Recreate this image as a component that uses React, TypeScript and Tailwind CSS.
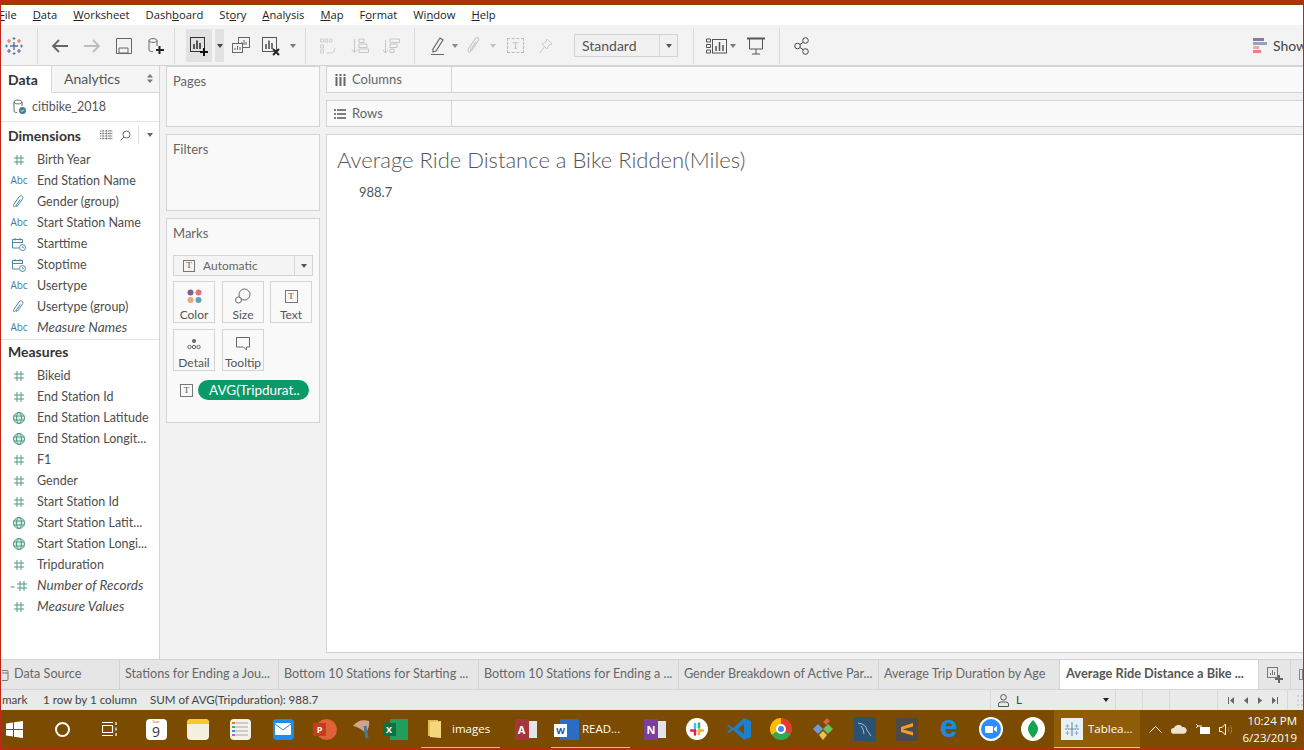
import React from 'react';

const Svg = ({ w = 20, h = 20, children, className = '' }: { w?: number; h?: number; children: React.ReactNode; className?: string }) => (
  <svg width={w} height={h} viewBox={`0 0 ${w} ${h}`} fill="none" className={`shrink-0 ${className}`}>
    {children}
  </svg>
);

const Caret = ({ color = '#666', className = '' }: { color?: string; className?: string }) => (
  <svg width="6" height="4" viewBox="0 0 6 4" className={`shrink-0 ${className}`}>
    <path d="M0 0h6L3 4z" fill={color} />
  </svg>
);

const Sep = ({ className = '' }: { className?: string }) => <div className={`w-px h-[36px] bg-[#dcdcdc] shrink-0 ${className}`} />;

const menus: [string, string, string][] = [
  ['', 'F', 'ile'],
  ['', 'D', 'ata'],
  ['', 'W', 'orksheet'],
  ['Dash', 'b', 'oard'],
  ['St', 'o', 'ry'],
  ['', 'A', 'nalysis'],
  ['', 'M', 'ap'],
  ['F', 'o', 'rmat'],
  ['Wi', 'n', 'dow'],
  ['', 'H', 'elp'],
];

const TableauLogo = ({ size = 20 }: { size?: number }) => (
  <svg width={size} height={size} viewBox="0 0 20 20" className="shrink-0">
    <path d="M10 6v8M6 10h8" stroke="#5b6f9c" strokeWidth="1.400" />
    <path d="M5 3v4M3 5h4M15 3v4M13 5h4" stroke="#e2725b" strokeWidth="1.200" />
    <path d="M5 13v4M3 15h4M15 13v4M13 15h4" stroke="#7b5d93" strokeWidth="1.200" />
    <path d="M10 1v3M8.500 2.500h3M10 16v3M8.500 17.500h3M2.500 8.500v3M1 10h3M17.500 8.500v3M16 10h3" stroke="#3d8da8" strokeWidth="1" />
  </svg>
);

const ChartBox = ({ color = '#444' }: { color?: string }) => (
  <>
    <rect x="1.500" y="1.500" width="14" height="14" stroke={color} />
    <path d="M5 13V8M8 13V4.500M11 13V7" stroke={color} strokeWidth="1.600" />
  </>
);

const Toolbar = () => (
  <div className="h-[41px] bg-[#f3f3f3] border-b border-[#d4d4d4] flex items-center pl-[3px] pt-[1px] shrink-0">
    <TableauLogo />
    <Sep className="ml-[13px]" />
    <Svg className="ml-[12px]">
      <path d="M18 10H3M9 4l-6 6 6 6" stroke="#666" strokeWidth="1.800" />
    </Svg>
    <Svg className="ml-[12px]">
      <path d="M2 10h15M11 4l6 6-6 6" stroke="#bdbdbd" strokeWidth="1.800" />
    </Svg>
    <Svg w={16} h={16} className="ml-[14px]">
      <path d="M.5.5h15v15H.5z" stroke="#666" />
      <path d="M3 15v-5h9v5z" stroke="#666" />
    </Svg>
    <Svg w={18} h={18} className="ml-[15px]">
      <path d="M2 3.500C2 1 10 1 10 3.500V9M2 3.500V13c0 1 1.500 1.500 4 1.700M2 3.500c0 2.500 8 2.500 8 0" stroke="#666" />
      <path d="M12.500 9v8M9 13h8" stroke="#222" strokeWidth="2" />
    </Svg>
    <Sep className="ml-[9px]" />
    <div className="ml-[11px] w-[26px] h-[33px] bg-[#e2e2e2] flex items-center justify-center">
      <Svg w={20} h={20}>
        <ChartBox color="#333" />
        <path d="M15 12v8M11 16h8" stroke="#111" strokeWidth="2" />
      </Svg>
    </div>
    <div className="ml-[3px] w-[9px] h-[33px] bg-[#e2e2e2] flex items-center justify-center">
      <Caret color="#444" />
    </div>
    <Svg w={18} h={17} className="ml-[8px]">
      <rect x="6.500" y=".5" width="11" height="10" fill="#f3f3f3" stroke="#666" />
      <path d="M10 8V5M12 8V3M14 8V5" stroke="#666" />
      <rect x=".5" y="6.500" width="10" height="9" fill="#f3f3f3" stroke="#666" />
      <path d="M3 13v-2M5.500 13V9M8 13v-3" stroke="#666" />
    </Svg>
    <Svg w={20} h={20} className="ml-[11px]">
      <ChartBox color="#555" />
      <path d="M12 13l6 6M18 13l-6 6" stroke="#222" strokeWidth="2" />
    </Svg>
    <Caret color="#777" className="ml-[9px]" />
    <Sep className="ml-[9px]" />
    <Svg w={18} h={18} className="ml-[13px]">
      <path d="M1.500 2h3v3h-3zM6 2h2.500v3H6zM10.500 2H13v3h-2.500zM1.500 8h3v3h-3zM1.500 13h3v3h-3zM8 16h5q3-1 3-5" stroke="#cfcfcf" />
    </Svg>
    <Svg w={18} h={18} className="ml-[14px]">
      <path d="M3.500 2v13M1 12.500l2.500 3 2.500-3" stroke="#c6c6c6" />
      <path d="M8 2h5v3.500H8zM8 7h8v3.500H8zM8 12h9.500v3.500H8z" stroke="#c6c6c6" />
    </Svg>
    <Svg w={18} h={18} className="ml-[13px]">
      <path d="M3.500 3v13M1 13l2.500 3 2.500-3" stroke="#c6c6c6" />
      <path d="M8 2h9.500v3.500H8zM8 7h7v3.500H8zM8 12h4v3.500H8z" stroke="#c6c6c6" />
    </Svg>
    <Sep className="ml-[14px]" />
    <Svg w={16} h={20} className="ml-[15px]">
      <path d="M3 13L10 2l3 2-7 11-3 1zM1 18.500h13" stroke="#666" strokeWidth="1.200" />
    </Svg>
    <Caret color="#888" className="ml-[6px]" />
    <Svg w={14} h={20} className="ml-[9px]">
      <path d="M4 15c-2 3-4 0-2-3l6-9c2-3 5-1 3 2l-6 9c-1 1.500-2 .5-1-1l5-7" stroke="#c9c9c9" strokeWidth="1.200" />
    </Svg>
    <Caret color="#c4c4c4" className="ml-[9px]" />
    <div className="ml-[11px] w-[17px] h-[15px] border border-dashed border-[#bbb] flex items-center justify-center text-[10px] text-[#bbb] font-['Liberation_Serif',serif] leading-none">
      T
    </div>
    <Svg w={14} h={16} className="ml-[15px]">
      <path d="M8 1l5 5-3 1-2 4-5-5 4-2zM5.500 8.500L1 15" stroke="#c9c9c9" />
    </Svg>
    <div className="ml-[21px] w-[104px] h-[23px] border border-[#d2d2d2] bg-[#f1f1f1] flex items-center">
      <span className="pl-[7px] flex-1 text-[14px] leading-[20px] text-[#555]">Standard</span>
      <div className="w-[18px] h-full border-l border-[#d8d8d8] flex items-center justify-center">
        <Caret color="#555" />
      </div>
    </div>
    <Sep className="ml-[15px]" />
    <Svg w={21} h={16} className="ml-[12px]">
      <path d="M.5 1h4v3h-4zM.5 6.500h4v3h-4zM.5 12h4v3h-4z" stroke="#555" />
      <rect x="6.500" y="1.500" width="14" height="13.500" stroke="#555" />
      <path d="M10 13V8M13.500 13V4M17 13V7" stroke="#555" strokeWidth="1.500" />
    </Svg>
    <Caret color="#777" className="ml-[3px]" />
    <Svg w={18} h={18} className="ml-[11px]">
      <path d="M0 1.500h18" stroke="#555" strokeWidth="2" />
      <path d="M2.500 2v10h13V2M9 12v5M5 17h8" stroke="#555" />
    </Svg>
    <Sep className="ml-[14px]" />
    <Svg w={16} h={18} className="ml-[14px]">
      <circle cx="11.500" cy="3.500" r="2.800" stroke="#444" />
      <circle cx="3.500" cy="9" r="2.800" stroke="#444" />
      <circle cx="11.500" cy="14.500" r="2.800" stroke="#444" />
      <path d="M6 7.500l3-2M6 10.500l3 2" stroke="#444" />
    </Svg>
    <div className="flex-1" />
    <div className="flex items-center gap-[6px] w-[50px] shrink-0 overflow-hidden">
      <Svg w={14} h={16}>
        <rect y="0" width="11" height="3" fill="#8a7aa3" />
        <rect y="4" width="14" height="3" fill="#8fa7bd" />
        <rect y="8" width="6" height="3" fill="#f0a9a0" />
        <rect y="12" width="8" height="3" fill="#ec7f8c" />
      </Svg>
      <span className="text-[14px] text-[#444] whitespace-nowrap">Show Me</span>
    </div>
  </div>
);

const Hash = () => (
  <svg width="12" height="12" viewBox="0 0 12 12">
    <path d="M4 1v10M8 1v10M1 4h10M1 8h10" stroke="#4f9a86" />
  </svg>
);

const Globe = () => (
  <svg width="12" height="12" viewBox="0 0 12 12" fill="none">
    <circle cx="6" cy="6" r="5.500" fill="#d9eee8" stroke="#4f9a86" />
    <ellipse cx="6" cy="6" rx="2.500" ry="5.500" stroke="#4f9a86" />
    <path d="M.5 4h11M.5 8h11" stroke="#4f9a86" />
  </svg>
);

const Clip = () => (
  <svg width="12" height="14" viewBox="0 0 12 14" fill="none">
    <path d="M3 10.500c-2 2.500-3.500.5-2-1.500l5-7c2-2.500 5-.5 3.500 2l-5 7c-1 1-2 .2-1.200-1l4-5.500" stroke="#4b89a3" />
  </svg>
);

const Cal = () => (
  <svg width="14" height="14" viewBox="0 0 14 14" fill="none">
    <path d="M7 11H.5V2.500h10V6M.5 5.500h10M3 1v2.500M8 1v2.500" stroke="#4b89a3" />
    <circle cx="10.500" cy="10.500" r="3" fill="#fff" stroke="#4b89a3" />
    <path d="M10.500 9v1.700h1.500" stroke="#4b89a3" strokeWidth=".8" />
  </svg>
);

const Abc = () => <span className="text-[10px] font-['Open_Sans',sans-serif] text-[#3f7d9c]">Abc</span>;

const FieldRow = ({ icon, name, italic = false }: { icon: React.ReactNode; name: string; italic?: boolean }) => (
  <div className="h-[21px] flex items-center">
    <div className="w-[18px] ml-[9px] flex justify-center items-center shrink-0">{icon}</div>
    <span className={`ml-[9px] text-[#4e4e4e] whitespace-nowrap ${italic ? 'italic text-[13.5px]' : 'text-[12.5px] mt-[2px]'}`}>{name}</span>
  </div>
);

const dimensions: [React.ReactNode, string, boolean?][] = [
  [<Hash />, 'Birth Year'],
  [<Abc />, 'End Station Name'],
  [<Clip />, 'Gender (group)'],
  [<Abc />, 'Start Station Name'],
  [<Cal />, 'Starttime'],
  [<Cal />, 'Stoptime'],
  [<Abc />, 'Usertype'],
  [<Clip />, 'Usertype (group)'],
  [<Abc />, 'Measure Names', true],
];

const measures: [React.ReactNode, string, boolean?][] = [
  [<Hash />, 'Bikeid'],
  [<Hash />, 'End Station Id'],
  [<Globe />, 'End Station Latitude'],
  [<Globe />, 'End Station Longit...'],
  [<Hash />, 'F1'],
  [<Hash />, 'Gender'],
  [<Hash />, 'Start Station Id'],
  [<Globe />, 'Start Station Latit...'],
  [<Globe />, 'Start Station Longi...'],
  [<Hash />, 'Tripduration'],
  [
    <span className="flex items-center gap-[1px]">
      <span className="text-[8px] leading-none text-[#4f9a86]">=</span>
      <Hash />
    </span>,
    'Number of Records',
    true,
  ],
  [<Hash />, 'Measure Values', true],
];

const DataPanel = () => (
  <div className="w-[159px] bg-white border-r border-[#d4d4d4] shrink-0 flex flex-col">
    <div className="h-[27px] flex border-b border-[#d8d8d8] shrink-0">
      <div className="w-[51px] bg-white flex items-center pl-[7px] pb-[1px] -mb-px border-r border-[#d8d8d8] text-[14px] font-bold text-[#333]">Data</div>
      <div className="flex-1 bg-[#f5f5f5] flex items-center pl-[12px] pb-[1px] text-[14px] text-[#555]">
        Analytics
        <svg width="6" height="9" viewBox="0 0 6 9" className="ml-[27px]">
          <path d="M0 3.500L3 0l3 3.500zM0 5.500L3 9l3-3.500z" fill="#777" />
        </svg>
      </div>
    </div>
    <div className="h-[29px] flex items-center pl-[12px] border-b border-[#e4e4e4] shrink-0">
      <svg width="14" height="16" viewBox="0 0 14 16" fill="none">
        <path d="M1 3C1 .5 9 .5 9 3v4M1 3v9c0 1 1.500 1.500 3 1.500M1 3c0 2.500 8 2.500 8 0" stroke="#666" />
        <circle cx="9.500" cy="11.500" r="3.500" fill="#3f7d9c" />
        <path d="M8 11.500l1 1 2-2" stroke="#fff" />
      </svg>
      <span className="ml-[5px] text-[12.5px] text-[#555]">citibike_2018</span>
    </div>
    <div className="h-[27px] flex items-center pl-[7px] pb-[1px] shrink-0">
      <span className="text-[14px] font-bold text-[#333] w-[91px]">Dimensions</span>
      <svg width="13" height="10" viewBox="0 0 13 10" className="ml-[1px]">
        <path d="M0 1h13M0 3.500h13M0 6h13M0 8.500h13M3 0v10M6.500 0v10M10 0v10" stroke="#777" strokeDasharray="1 .6" />
      </svg>
      <svg width="11" height="11" viewBox="0 0 11 11" fill="none" className="ml-[7px]">
        <circle cx="6.500" cy="4.500" r="3.500" stroke="#666" />
        <path d="M4 7l-3.500 3.500" stroke="#666" />
      </svg>
      <div className="w-px h-[18px] bg-[#ddd] ml-[7px]" />
      <Caret color="#666" className="ml-[8px]" />
    </div>
    <div className="flex flex-col shrink-0">
      {dimensions.map(([icon, name, italic]) => (
        <FieldRow key={name} icon={icon} name={name} italic={italic} />
      ))}
    </div>
    <div className="h-[24px] mt-[1px] border-t border-[#e4e4e4] flex items-center pl-[7px] text-[14px] font-bold text-[#333] shrink-0">Measures</div>
    <div className="flex flex-col mt-[2px]">
      {measures.map(([icon, name, italic]) => (
        <FieldRow key={name} icon={icon} name={name} italic={italic} />
      ))}
    </div>
  </div>
);

const MarkButton = ({ icon, label }: { icon: React.ReactNode; label: string }) => (
  <div className="w-[42px] h-[42px] border border-[#d4d4d4] bg-[#f9f9f9] flex flex-col items-center justify-between pt-[5px]">
    <div className="h-[18px] flex items-center justify-center">{icon}</div>
    <span className="text-[12px] leading-[15px] text-[#555]">{label}</span>
  </div>
);

const TBox = ({ size = 12 }: { size?: number }) => (
  <div
    className="border border-[#777] flex items-center justify-center text-[9px] leading-none text-[#555] font-['Liberation_Serif',serif] shrink-0"
    style={{ width: size, height: size }}
  >
    T
  </div>
);

const Card = ({ title, className = '', children }: { title: string; className?: string; children?: React.ReactNode }) => (
  <div className={`bg-[#f9f9f9] border border-[#d4d4d4] px-[6px] pt-[6px] ${className}`}>
    <div className="text-[13px] leading-[16px] text-[#666]">{title}</div>
    {children}
  </div>
);

const SidePanel = () => (
  <div className="w-[166px] shrink-0 bg-[#f2f2f2] pl-[6px] pr-[6px] flex flex-col">
    <Card title="Pages" className="h-[61px]" />
    <Card title="Filters" className="h-[77px] mt-[7px]" />
    <Card title="Marks" className="h-[205px] mt-[7px]">
      <div className="mt-[14px] h-[21px] w-[140px] border border-[#d4d4d4] bg-[#f4f4f4] flex items-center pl-[9px]">
        <TBox />
        <span className="ml-[8px] text-[12px] text-[#666] flex-1">Automatic</span>
        <div className="w-[18px] h-full border-l border-[#d8d8d8] flex items-center justify-center">
          <Caret color="#555" />
        </div>
      </div>
      <div className="mt-[5px] grid grid-cols-[49px_48px_42px] gap-y-[6px]">
        <MarkButton
          label="Color"
          icon={
            <svg width="15" height="15" viewBox="0 0 15 15">
              <circle cx="3.500" cy="3.500" r="3" fill="#7a6291" />
              <circle cx="11.500" cy="3.500" r="3" fill="#e2717f" />
              <circle cx="3.500" cy="11" r="3" fill="#eba67f" />
              <circle cx="11.500" cy="11" r="3" fill="#5fa3b5" />
            </svg>
          }
        />
        <MarkButton
          label="Size"
          icon={
            <svg width="16" height="16" viewBox="0 0 16 16" fill="none">
              <circle cx="9.500" cy="6.500" r="5.500" stroke="#666" />
              <circle cx="3.500" cy="12" r="3" fill="#f9f9f9" stroke="#666" />
            </svg>
          }
        />
        <MarkButton label="Text" icon={<TBox size={13} />} />
        <MarkButton
          label="Detail"
          icon={
            <svg width="14" height="12" viewBox="0 0 14 12" fill="none">
              <circle cx="7" cy="3" r="2" fill="#666" />
              <circle cx="2.500" cy="9" r="1.700" stroke="#666" />
              <circle cx="7" cy="9" r="1.700" stroke="#666" />
              <circle cx="11.500" cy="9" r="1.700" stroke="#666" />
            </svg>
          }
        />
        <MarkButton
          label="Tooltip"
          icon={
            <svg width="14" height="14" viewBox="0 0 14 14" fill="none">
              <path d="M.5.5h13v9.500h-3v3l-3-3H.5z" stroke="#666" />
            </svg>
          }
        />
      </div>
      <div className="mt-[9px] flex items-center pl-[7px]">
        <TBox size={13} />
        <div className="ml-[5px] w-[111px] h-[20px] rounded-full bg-[#0a9a6a] text-white text-[13.5px] leading-[20px] pl-[11px] whitespace-nowrap overflow-hidden">AVG(Tripdurat..</div>
      </div>
    </Card>
  </div>
);

const ShelfRow = ({ icon, label, className = '' }: { icon: React.ReactNode; label: string; className?: string }) => (
  <div className={`h-[27px] bg-[#f9f9f9] border-y border-[#d4d4d4] border-l flex shrink-0 ${className}`}>
    <div className="w-[125px] border-r border-[#d4d4d4] flex items-center pl-[7px] shrink-0">
      <div className="w-[12px] flex justify-center shrink-0">{icon}</div>
      <span className="ml-[6px] text-[13px] text-[#666]">{label}</span>
    </div>
  </div>
);

const MainArea = () => (
  <div className="flex-1 bg-[#f2f2f2] flex flex-col min-w-0">
    <ShelfRow
      label="Columns"
      icon={
        <svg width="11" height="12" viewBox="0 0 11 12">
          <path d="M1.500 3v9M5.500 3v9M9.500 3v9" stroke="#666" strokeWidth="2" />
          <path d="M1.500 0v2M5.500 0v2M9.500 0v2" stroke="#666" strokeWidth="2" />
        </svg>
      }
    />
    <ShelfRow
      label="Rows"
      className="mt-[7px]"
      icon={
        <svg width="12" height="10" viewBox="0 0 12 10">
          <path d="M3 1h9M3 5h9M3 9h9M0 1h2M0 5h2M0 9h2" stroke="#555" strokeWidth="1.500" />
        </svg>
      }
    />
    <div className="mt-[7px] h-[519px] bg-white border border-r-0 border-[#d4d4d4] pl-[10px] pt-[11px] shrink-0">
      <div className="font-light text-[22px] leading-[28px] text-[#555]">Average Ride Distance a Bike Ridden(Miles)</div>
      <div className="ml-[22px] mt-[11px] text-[13px] leading-[14px] text-[#555]">988.7</div>
    </div>
  </div>
);

const tabs: [string, number][] = [
  ['Stations for Ending a Jou...', 159],
  ['Bottom 10 Stations for Starting ...', 200],
  ['Bottom 10 Stations for Ending a ...', 200],
  ['Gender Breakdown of Active Par...', 200],
  ['Average Trip Duration by Age', 181],
];

const TabBar = () => (
  <div className="h-[31px] bg-[#e6e6e6] border-y border-[#d4d4d4] flex items-stretch shrink-0 overflow-hidden">
    <div className="w-[119px] border-r border-[#d4d4d4] flex items-center pl-[1px] shrink-0">
      <svg width="7" height="12" viewBox="0 0 7 12" fill="none">
        <path d="M0 1.500h5q1 0 1 1v8q0 1-1 1H0M0 4h6" stroke="#777" />
      </svg>
      <span className="ml-[5px] text-[12.6px] text-[#666]">Data Source</span>
    </div>
    {tabs.map(([name, width]) => (
      <div key={name} className="border-r border-[#d4d4d4] flex items-center pl-[5px] shrink-0 overflow-hidden" style={{ width }}>
        <span className="text-[12.6px] text-[#666] whitespace-nowrap">{name}</span>
      </div>
    ))}
    <div className="w-[199px] bg-white flex items-center pl-[6px] -mt-px shrink-0 border-r border-[#d4d4d4]">
      <span className="text-[12.8px] font-bold text-[#555] whitespace-nowrap">Average Ride Distance a Bike ...</span>
    </div>
    <div className="w-[32px] border-r border-[#d4d4d4] flex items-center justify-center shrink-0">
      <svg width="16" height="16" viewBox="0 0 16 16" fill="none">
        <rect x=".5" y=".5" width="10" height="10" stroke="#777" />
        <path d="M3.500 8V6M5.500 8V3M7.500 8V5" stroke="#777" />
        <path d="M12 8v8M8 12h8" stroke="#666" strokeWidth="2" />
      </svg>
    </div>
    <div className="flex-1 flex items-center pl-[8px]">
      <div className="w-[4px] h-[11px] border border-[#888]" />
    </div>
  </div>
);

const StatusBar = () => (
  <div className="h-[20px] bg-[#eaeaea] flex items-center shrink-0 text-[11.6px] text-[#444] whitespace-nowrap">
    <span className="ml-[1px] w-[41px]">mark</span>
    <span className="w-[107px]">1 row by 1 column</span>
    <span className="w-[840px]">SUM of AVG(Tripduration): 988.7</span>
    <div className="w-[126px] h-full border-x border-[#d9d9d9] flex items-center pl-[7px] shrink-0">
      <svg width="11" height="13" viewBox="0 0 11 13" fill="none">
        <path d="M5.500.5a2.800 2.800 0 110 5.600 2.800 2.800 0 010-5.600zM.5 12.500V10q0-2 3-2h4q3 0 3 2v2.500z" stroke="#555" />
      </svg>
      <span className="ml-[7px] flex-1">L</span>
      <Caret color="#222" className="mr-[6px]" />
    </div>
    <div className="w-[27px] h-full border-r border-[#d9d9d9] shrink-0" />
    <div className="w-[27px] h-full border-r border-[#d9d9d9] shrink-0" />
    <div className="w-[48px] h-full border-r border-[#d9d9d9] shrink-0" />
    <div className="w-[70px] h-full border-r border-[#d9d9d9] flex items-center justify-center gap-[10px] shrink-0">
      <svg width="6" height="7" viewBox="0 0 6 7"><path d="M0 0h1v7H0zM6 0v7L2 3.500z" fill="#666" /></svg>
      <svg width="4" height="7" viewBox="0 0 4 7"><path d="M4 0v7L0 3.500z" fill="#666" /></svg>
      <svg width="4" height="7" viewBox="0 0 4 7"><path d="M0 0v7l4-3.500z" fill="#666" /></svg>
      <svg width="6" height="7" viewBox="0 0 6 7"><path d="M5 0h1v7H5zM0 0v7l4-3.500z" fill="#666" /></svg>
    </div>
    <svg width="6" height="11" viewBox="0 0 6 11" className="ml-[9px] shrink-0">
      <path d="M0 0h2v2H0zM4 0h2v2H4zM0 4.500h2v2H0zM4 4.500h2v2H4zM0 9h2v2H0zM4 9h2v2H4z" fill="#cfcfcf" />
    </svg>
  </div>
);

const Running = ({ w, children, gap = 0 }: { w: number; children: React.ReactNode; gap?: number }) => (
  <div className="relative h-full flex items-center shrink-0" style={{ width: w, marginLeft: gap }}>
    {children}
    <div className="absolute bottom-0 left-0 right-0 h-[1px] bg-[#e8b98c]" />
  </div>
);

const Slot = ({ w, children }: { w: number; children: React.ReactNode }) => (
  <div className="h-full flex items-center justify-center shrink-0" style={{ width: w }}>
    {children}
  </div>
);

const Taskbar = () => (
  <div className="h-[38px] bg-[#7a4b00] flex items-center shrink-0 pl-[3px] text-white font-['Open_Sans',sans-serif]">
    <Slot w={20}>
      <svg width="17" height="17" viewBox="0 0 17 17" fill="#fff">
        <path d="M0 2.500L7 1.500V8H0zM8 1.300L17 0v8H8zM0 9h7v6.500L0 14.500zM8 9h9v8l-9-1.300z" />
      </svg>
    </Slot>
    <Slot w={76}>
      <div className="w-[15px] h-[15px] rounded-full border-2 border-white" />
    </Slot>
    <Slot w={20}>
      <svg width="16" height="16" viewBox="0 0 16 16" fill="none" stroke="#fff">
        <path d="M.5 4.500h10v7H.5zM0 1.500h11M0 14.500h11M14 1v3M14 6.500v3M14 12v3" strokeWidth="1.200" />
      </svg>
    </Slot>
    <Slot w={72}>
      <div className="w-[21px] h-[21px] rounded-[4px] bg-white flex flex-col items-center overflow-hidden">
        <div className="h-[6px] w-full text-center text-[4px] leading-[6px] text-[#d33]">Sun</div>
        <div className="text-[14px] leading-[14px] text-[#333]">9</div>
      </div>
    </Slot>
    <Slot w={12}>
      <div className="w-[22px] h-[21px] rounded-[4px] bg-[#f5f0e0] overflow-hidden shrink-0">
        <div className="h-[5px] bg-[#f7c92f]" />
      </div>
    </Slot>
    <Slot w={72}>
      <div className="w-[21px] h-[21px] rounded-[4px] bg-[#f5f2ea] flex flex-col justify-center gap-[2px] pl-[2px]">
        <div className="h-[2px] w-[16px] bg-[linear-gradient(90deg,#e67e22_20%,#ccc_20%)]" />
        <div className="h-[2px] w-[16px] bg-[linear-gradient(90deg,#45b36b_20%,#ccc_20%)]" />
        <div className="h-[2px] w-[16px] bg-[linear-gradient(90deg,#3a8ee6_20%,#ccc_20%)]" />
        <div className="h-[2px] w-[16px] bg-[linear-gradient(90deg,#a36ad4_20%,#ccc_20%)]" />
      </div>
    </Slot>
    <Slot w={14}>
      <div className="w-[21px] h-[21px] rounded-[4px] bg-[#1f8de8] flex items-center justify-center shrink-0">
        <svg width="16" height="12" viewBox="0 0 16 12">
          <rect width="16" height="12" rx="1" fill="#fff" />
          <path d="M0 1l8 6 8-6" stroke="#1f8de8" fill="none" />
        </svg>
      </div>
    </Slot>
    <Slot w={66}>
      <div className="relative w-[24px] h-[21px] ml-[4px]">
        <div className="absolute right-0 top-0 w-[21px] h-[21px] rounded-full bg-[#e0623a]" />
        <div className="absolute left-0 top-[4px] w-[13px] h-[13px] bg-[#c43e1c] text-[9px] leading-[13px] font-bold text-center">P</div>
      </div>
    </Slot>
    <Slot w={12}>
      <svg width="18" height="22" viewBox="0 0 18 22" className="shrink-0">
        <path d="M0 8Q6 0 16 3 17 8 13 15 6 9 0 8z" fill="#cfa58f" />
        <path d="M12 8l2 12" stroke="#3f7f95" strokeWidth="3" />
      </svg>
    </Slot>
    <Slot w={62}>
      <div className="relative w-[25px] h-[21px] mr-[8px]">
        <div className="absolute right-0 top-0 w-[18px] h-[21px] bg-[#1f9e5e]" />
        <div className="absolute left-0 top-[4px] w-[13px] h-[13px] bg-[#107040] text-[9px] leading-[13px] font-bold text-center">X</div>
      </div>
    </Slot>
    <Running w={79} gap={-9}>
      <svg width="13" height="20" viewBox="0 0 13 20" className="shrink-0 ml-[7px]">
        <path d="M0 1h10v16H0z" fill="#e6bb55" />
        <path d="M2 3l11-1v17l-11-1z" fill="#f5d77c" />
      </svg>
      <span className="ml-[11px] text-[11.5px]">images</span>
    </Running>
    <Slot w={51}>
      <div className="relative w-[22px] h-[21px]">
        <div className="absolute right-0 top-[2px] w-[14px] h-[17px] bg-[#e4e4e4]" />
        <div className="absolute left-0 top-0 w-[14px] h-[21px] bg-[#a4373a] text-[11px] leading-[21px] font-bold text-center">A</div>
      </div>
    </Slot>
    <Running w={79}>
      <div className="relative w-[25px] h-[21px] shrink-0 ml-[3px]">
        <div className="absolute right-0 top-0 w-[19px] h-[21px] bg-[#2b6cc4]" />
        <div className="absolute left-0 top-[5px] w-[13px] h-[13px] bg-white text-[#1f4f9f] text-[9px] leading-[13px] font-bold text-center">W</div>
      </div>
      <span className="ml-[3px] text-[11.5px] whitespace-nowrap">READ...</span>
    </Running>
    <Slot w={50}>
      <div className="relative w-[22px] h-[21px]">
        <div className="absolute right-0 top-[2px] w-[12px] h-[17px] bg-[#e4e4e4]" />
        <div className="absolute left-0 top-0 w-[14px] h-[21px] bg-[#7b3f9d] text-[11px] leading-[21px] font-bold text-center">N</div>
      </div>
    </Slot>
    <Slot w={34}>
      <div className="w-[22px] h-[22px] rounded-full bg-white flex items-center justify-center shrink-0">
        <svg width="14" height="14" viewBox="0 0 14 14" strokeWidth="2.500" strokeLinecap="round">
          <path d="M5 2v4" stroke="#36c5f0" />
          <path d="M9 1.500v4" stroke="#2eb67d" />
          <path d="M5 12.500v-4" stroke="#e01e5a" />
          <path d="M9 8.500h4" stroke="#ecb22e" />
          <path d="M1 8.500h4" stroke="#e01e5a" />
          <path d="M9 8v4" stroke="#ecb22e" />
        </svg>
      </div>
    </Slot>
    <Slot w={50}>
      <svg width="24" height="22" viewBox="0 0 24 22">
        <path d="M17 0l7 3v16l-7 3L6 12l-4 3-2-1 4-3-4-3 2-1 4 3zM17 6l-6 5 6 5z" fill="#1f7fc8" fillRule="evenodd" />
      </svg>
    </Slot>
    <Slot w={34}>
      <div className="w-[22px] h-[22px] rounded-full bg-[conic-gradient(#e33b2e_0_33%,#34a853_33%_66%,#fbbc05_66%)] flex items-center justify-center shrink-0">
        <div className="w-[10px] h-[10px] rounded-full bg-[#4285f4] border-2 border-white" />
      </div>
    </Slot>
    <Slot w={50}>
      <svg width="24" height="24" viewBox="0 0 24 24">
        <path d="M12 5l4-4 3 3-4 4z" fill="#e0604e" />
        <path d="M7 7l5 5-5 5-5-5z" fill="#6f9ae0" />
        <path d="M17 7l5 5-5 5-5-5z" fill="#6fbf60" />
        <path d="M12 14l4 4-4 5-4-5z" fill="#e8c24a" />
      </svg>
    </Slot>
    <Slot w={34}>
      <div className="w-[22px] h-[24px] bg-[#2b5173] shrink-0 flex items-center justify-center">
        <svg width="18" height="18" viewBox="0 0 18 18" fill="none">
          <path d="M2 3q8 1 9 7l4 6M5 6q3 3 3 8" stroke="#9cc3dc" />
        </svg>
      </div>
    </Slot>
    <Slot w={50}>
      <div className="w-[22px] h-[23px] bg-[#4a4a4a] rounded-[2px] flex items-center justify-center">
        <svg width="12" height="13" viewBox="0 0 12 13">
          <path d="M12 0v3.500L0 7V4zM0 6l12 3v3.500L0 9z" fill="#f59a23" />
        </svg>
      </div>
    </Slot>
    <Slot w={34}>
      <span className="text-[32px] leading-none font-bold text-[#1e88e5] font-['Liberation_Sans',sans-serif] -mt-[6px]">e</span>
    </Slot>
    <Slot w={50}>
      <div className="w-[24px] h-[24px] rounded-full bg-white flex items-center justify-center">
        <div className="w-[20px] h-[20px] rounded-full bg-[#2d8cff] flex items-center justify-center gap-[1px]">
          <div className="w-[8px] h-[7px] bg-white rounded-[1px]" />
          <svg width="3" height="6" viewBox="0 0 3 6"><path d="M0 2l3-2v6L0 4z" fill="#fff" /></svg>
        </div>
      </div>
    </Slot>
    <Slot w={34}>
      <div className="w-[24px] h-[24px] rounded-full bg-white flex items-center justify-center shrink-0">
        <svg width="10" height="18" viewBox="0 0 10 18">
          <path d="M5 0q5 5 5 9t-5 9q-5-5-5-9t5-9z" fill="#13a54c" />
        </svg>
      </div>
    </Slot>
    <div className="relative ml-[4px] w-[86px] h-full bg-[#8f5c08] flex items-center pl-[7px] shrink-0">
      <div className="w-[22px] h-[22px] bg-[#e8f0f4] flex items-center justify-center shrink-0">
        <svg width="16" height="16" viewBox="0 0 16 16">
          <path d="M8 1v14M1 8h14" stroke="#6f93ad" strokeWidth="1.200" />
          <path d="M3.500 3v4M1.500 5h4M12.500 3v4M10.500 5h4M3.500 10v4M1.500 12h4M12.500 10v4M10.500 12h4" stroke="#8fb0c4" />
        </svg>
      </div>
      <span className="ml-[5px] text-[11.5px] whitespace-nowrap">Tablea...</span>
      <div className="absolute bottom-0 left-0 right-0 h-[1px] bg-[#e8c99c]" />
    </div>
    <svg width="13" height="7" viewBox="0 0 13 7" fill="none" className="ml-[9px] shrink-0">
      <path d="M.5 6.500l6-6 6 6" stroke="#fff" />
    </svg>
    <svg width="16" height="10" viewBox="0 0 17 10" className="ml-[9px] shrink-0">
      <path d="M3 10a3 3 0 010-6 5 5 0 019-1 3.500 3.500 0 012 7z" fill="#f0e4d0" />
    </svg>
    <svg width="16" height="12" viewBox="0 0 16 12" fill="none" className="ml-[8px] shrink-0">
      <path d="M1 1l2 2-2 2M3 3h4" stroke="#fff" />
      <rect x="5" y="4" width="10" height="7" fill="#fff" />
    </svg>
    <svg width="16" height="13" viewBox="0 0 16 13" fill="none" className="ml-[8px] shrink-0">
      <path d="M.5 4.500H3L6.500 1v11L3 8.500H.5z" stroke="#fff" />
      <path d="M9 4q1.500 2.500 0 5M11.500 2.500q2.500 4 0 8" stroke="#a08050" />
    </svg>
    <div className="ml-[6px] w-[56px] shrink-0 text-[11.5px] leading-[17px] text-white text-right whitespace-nowrap">
      <div>10:24 PM</div>
      <div>6/23/2019</div>
    </div>
  </div>
);

export default function App() {
  return (
    <div className="w-[1304px] h-[750px] overflow-hidden bg-white flex flex-col font-['Lato',sans-serif] border-l border-r border-[#c0271a]">
      <div className="h-[3px] bg-[#b3300c] shrink-0" />
      <div className="h-[2px] bg-[#7a4b00] shrink-0" />
      <div className="h-[20px] bg-white flex items-center shrink-0 text-[11.2px] text-[#222] -ml-[1px] font-['Open_Sans',sans-serif]">
        {menus.map(([a, u, b], i) => (
          <span key={u + b} className={i === 0 ? 'mr-[16px] -ml-[1px]' : 'mr-[16px]'}>
            {a}
            <span className="underline">{u}</span>
            {b}
          </span>
        ))}
      </div>
      <Toolbar />
      <div className="flex h-[593px] shrink-0">
        <DataPanel />
        <SidePanel />
        <MainArea />
      </div>
      <TabBar />
      <StatusBar />
      <Taskbar />
      <div className="flex-1 bg-[#b3300c]" />
    </div>
  );
}
